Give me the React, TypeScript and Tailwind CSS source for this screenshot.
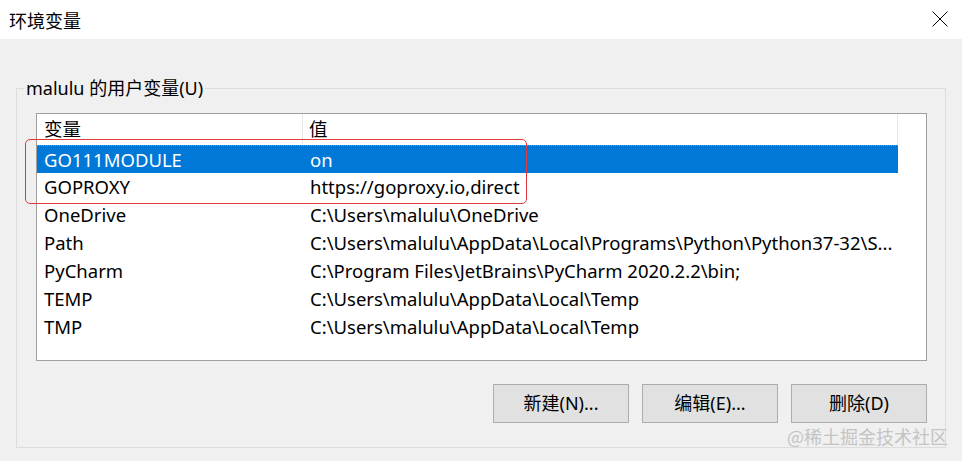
import React from "react";

const rows: [string, string][] = [
  ["GO111MODULE", "on"],
  ["GOPROXY", "https://goproxy.io,direct"],
  ["OneDrive", "C:\\Users\\malulu\\OneDrive"],
  ["Path", "C:\\Users\\malulu\\AppData\\Local\\Programs\\Python\\Python37-32\\S..."],
  ["PyCharm", "C:\\Program Files\\JetBrains\\PyCharm 2020.2.2\\bin;"],
  ["TEMP", "C:\\Users\\malulu\\AppData\\Local\\Temp"],
  ["TMP", "C:\\Users\\malulu\\AppData\\Local\\Temp"],
];

export default function App() {
  return (
    <div
      className="relative w-[962px] h-[461px] overflow-hidden bg-[#f0f0f0] flex flex-col text-black"
      style={{ fontFamily: '"Noto Sans", "Noto Sans CJK SC", sans-serif' }}
    >
      {/* title bar */}
      <div className="h-[39px] bg-white flex items-center justify-between pl-[9px] pr-[14px] shrink-0">
        <span className="text-[18px] leading-none" style={{ fontFamily: '"Noto Sans CJK SC", sans-serif' }}>
          环境变量
        </span>
        <svg width="16" height="16" viewBox="0 0 16 16" className="mt-[-2px]">
          <path d="M0.5 0.5 L15.5 15.5 M15.5 0.5 L0.5 15.5" stroke="#000" strokeWidth="1" fill="none" />
        </svg>
      </div>

      {/* body */}
      <div className="pl-[16px] pr-[16px] pt-[37px]">
        <fieldset className="border border-[#dcdcdc] h-[372px] px-0">
          <legend className="ml-[7px] px-[2px] text-[18px] leading-[24px]">malulu 的用户变量(U)</legend>
          <div className="pl-[19px] pr-[18px] pt-[13px]">
            {/* list */}
            <div className="border border-[#a0a0a0] bg-white h-[248px] flex flex-col text-[18.5px]">
              <div className="flex h-[31px] shrink-0">
                <div className="w-[266px] border-r border-[#e5e5e5] pl-[7px] pt-[2px] leading-[26px]">变量</div>
                <div className="w-[595px] border-r border-[#e5e5e5] pl-[6px] pt-[2px] leading-[26px]">值</div>
              </div>
              {rows.map(([k, v], i) => (
                <div
                  key={k}
                  className={
                    "flex h-[28px] w-[861px] items-center shrink-0 leading-[26px] " +
                    (i === 0 ? "bg-[#0078d7] text-white border-t border-dotted border-[#5aa0e0]" : "")
                  }
                >
                  <div className="w-[266px] pl-[7px] whitespace-nowrap">{k}</div>
                  <div className="pl-[7px] whitespace-nowrap">{v}</div>
                </div>
              ))}
            </div>
            {/* buttons */}
            <div className="flex justify-end gap-[13px] mt-[23px]">
              {["新建(N)...", "编辑(E)...", "删除(D)"].map((b) => (
                <button
                  key={b}
                  className="w-[136px] h-[39px] border border-[#adadad] bg-[#e1e1e1] text-[18px] flex items-center justify-center"
                >
                  {b}
                </button>
              ))}
            </div>
          </div>
        </fieldset>
      </div>

      {/* annotation */}
      <div className="absolute left-[25px] top-[139px] w-[502px] h-[65px] border border-[#e0393e] rounded-[5px]" />

      {/* watermark */}
      <div
        className="absolute left-[787px] top-[425px] text-[18px] leading-[22px] text-[#c4c4c4] whitespace-nowrap"
        style={{ fontFamily: '"Noto Sans CJK SC", sans-serif' }}
      >
        @稀土掘金技术社区
      </div>
    </div>
  );
}
